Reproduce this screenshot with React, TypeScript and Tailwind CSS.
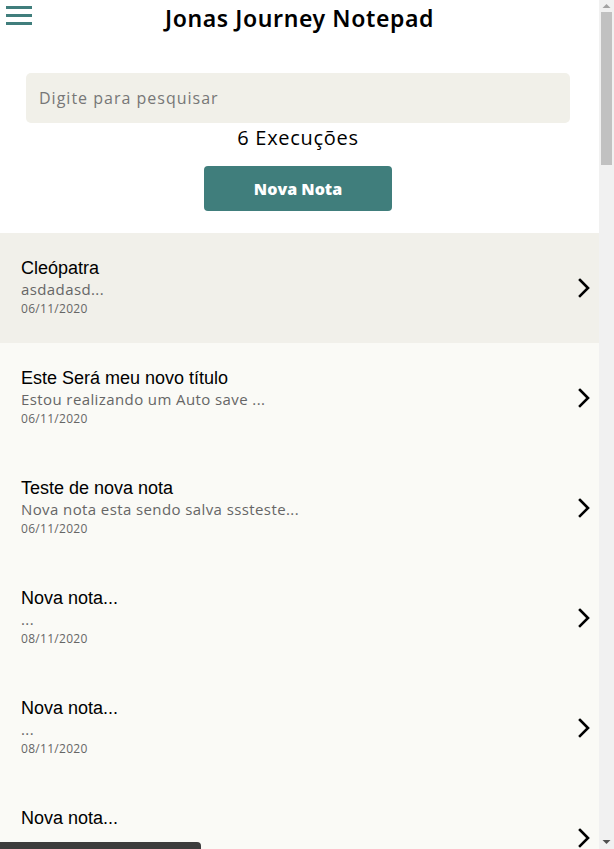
import React from "react";

const notes = [
  { title: "Cleópatra", desc: "asdadasd...", date: "06/11/2020", active: true },
  { title: "Este Será meu novo título", desc: "Estou realizando um Auto save ...", date: "06/11/2020" },
  { title: "Teste de nova nota", desc: "Nova nota esta sendo salva sssteste...", date: "06/11/2020" },
  { title: "Nova nota...", desc: "...", date: "08/11/2020" },
  { title: "Nova nota...", desc: "...", date: "08/11/2020" },
  { title: "Nova nota...", desc: "...", date: "08/11/2020" },
];

function Chevron() {
  return (
    <svg width="14" height="20" viewBox="0 0 14 20" fill="none">
      <path d="M3 2 L11 10 L3 18" stroke="#000" strokeWidth="2.6" strokeLinecap="square" strokeLinejoin="miter" />
    </svg>
  );
}

function FakeScrollbar() {
  return (
    <div className="fixed right-0 top-0 flex h-screen w-[15px] flex-col items-center bg-[#f1f1f1]">
      <svg width="9" height="12" viewBox="0 0 9 12" className="shrink-0">
        <path d="M0.5 8 L4.5 4 L8.5 8 Z" fill="#a3a3a3" />
      </svg>
      <div className="h-[153px] w-[11px] shrink-0 bg-[#c1c1c1]" />
      <div className="flex-1" />
      <svg width="9" height="12" viewBox="0 0 9 12" className="shrink-0">
        <path d="M0.5 3 L4.5 7 L8.5 3 Z" fill="#505050" />
      </svg>
    </div>
  );
}

export default function App() {
  return (
    <div className="min-h-screen bg-white" style={{ fontFamily: "'Open Sans', 'Noto Sans', sans-serif" }}>
      <div className="mr-[15px]">
        <header className="relative flex h-[36px] items-center justify-center">
          <button className="absolute left-[6px] top-[6px] flex w-[26px] flex-col gap-[5px]">
            <span className="block h-[3px] w-full bg-[#407e7c]" />
            <span className="block h-[3px] w-full bg-[#407e7c]" />
            <span className="block h-[3px] w-full bg-[#407e7c]" />
          </button>
          <h1 className="text-[23px] font-semibold leading-[36px] tracking-[0.6px] text-black" style={{ fontFamily: "'Noto Sans', sans-serif" }}>
            Jonas Journey Notepad
          </h1>
        </header>
        <div className="flex flex-col items-center pl-[26px] pr-[29px] pt-[37px]">
          <div className="flex h-[50px] w-full items-center rounded-[5px] bg-[#f1f0e9] px-[13px]">
            <span className="text-[16px] tracking-[1px] text-[#777]">Digite para pesquisar</span>
          </div>
          <p className="mt-[1px] text-[20px] leading-[28px] tracking-[0.7px] text-black">6 Execuções</p>
          <button className="mt-[14px] flex h-[45px] w-[188px] items-center justify-center rounded-[4px] bg-[#407e7c] text-[16px] font-extrabold text-white">
            Nova Nota
          </button>
        </div>
        <ul className="mt-[22px] min-h-[4300px] bg-[#fafaf6]">
          {notes.map((n, i) => (
            <li
              key={i}
              className={`flex h-[110px] items-center justify-between pl-[21px] pr-[8px] ${n.active ? "bg-[#f1f0ea]" : "bg-[#fafaf6]"}`}
            >
              <div className="flex flex-col">
                <span className="text-[18px] leading-[22px] text-black" style={{ fontFamily: "'Liberation Sans', Arial, sans-serif" }}>
                  {n.title}
                </span>
                <span className="text-[15px] leading-[20px] tracking-[0.4px] text-[#666]">{n.desc}</span>
                <span className="text-[12px] leading-[20px] tracking-[0.3px] text-[#666]">{n.date}</span>
              </div>
              <Chevron />
            </li>
          ))}
        </ul>
      </div>
      <FakeScrollbar />
      <div className="fixed bottom-0 left-0 h-[7px] w-[201px] rounded-tr-[4px] bg-[#3c3c3c]" />
    </div>
  );
}
